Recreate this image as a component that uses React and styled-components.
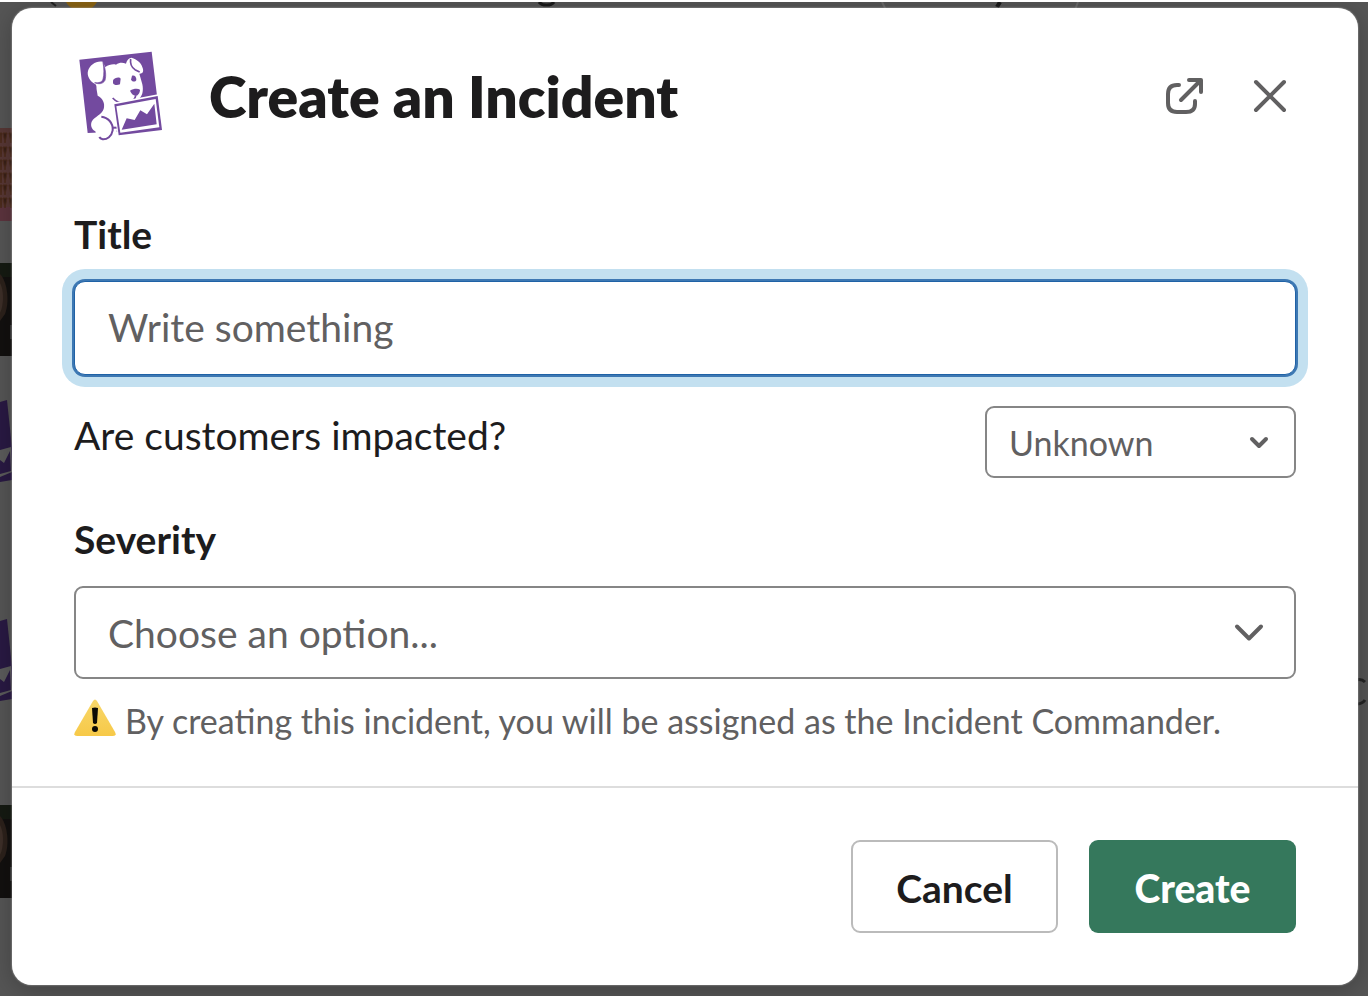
import React from "react";
import styled, { createGlobalStyle } from "styled-components";

const GlobalStyle = createGlobalStyle`
  *, *::before, *::after { box-sizing: border-box; }
  body {
    margin: 0;
    background: #555;
    color: #1d1c1d;
    font-family: Lato, "Liberation Sans", sans-serif;
  }
`;

const Page = styled.div`
  position: relative;
  min-height: 100vh;
  padding: 6px 10px 10px 12px;
  border-top: 2px solid #fff;
  overflow: hidden;
`;

const Backdrop = styled.div`
  position: absolute;
  inset: 0;
`;

const AvatarColumn = styled.div`
  display: flex;
  flex-direction: column;
  width: 24px;
  padding-top: 126px;
  svg { display: block; }
`;

const AvatarSlot = styled.div`
  margin-bottom: ${(p) => p.$gap}px;
`;

const TopPeek = styled.svg`
  position: absolute;
  top: 0;
  left: 0;
`;

const SidePeek = styled.svg`
  position: absolute;
  top: 674px;
  right: 0;
`;

const Modal = styled.form`
  position: relative;
  display: flex;
  flex-direction: column;
  background: #fff;
  border-radius: 20px;
  box-shadow: 0 0 2px #bbb, 0 4px 24px rgba(0, 0, 0, 0.25);
`;

const Header = styled.header`
  display: flex;
  align-items: center;
  height: 104px;
  margin: 36px 60px 0 62px;
`;

const Logo = styled.svg`
  width: 90px;
  height: 95px;
  margin: 0 0 2px 2px;
`;

const Heading = styled.h1`
  flex: 1;
  margin: 0 0 0 43px;
  font-size: 57px;
  line-height: 68px;
  font-weight: 800;
`;

const HeaderActions = styled.div`
  display: flex;
  gap: 30px;
`;

const IconButton = styled.button`
  display: flex;
  align-items: center;
  justify-content: center;
  width: 56px;
  height: 56px;
  padding: 0;
  border: 0;
  background: none;
  color: #616061;
  cursor: pointer;
`;

const Body = styled.div`
  display: flex;
  flex-direction: column;
  padding: 62px 62px 44px;
`;

const Field = styled.div`
  display: flex;
  flex-direction: column;
  gap: 23px;
`;

const Label = styled.label`
  font-size: 39px;
  line-height: 48px;
  font-weight: 700;
`;

const TextInput = styled.input`
  height: 94px;
  padding: 0 33px 2px;
  border: 1px solid #1f62a6;
  border-radius: 11px;
  outline: 0;
  box-shadow: 0 0 0 2px #3d78b3, 0 0 0 12px #c3e0f0;
  color: #1d1c1d;
  font: 400 39px/48px Lato, "Liberation Sans", sans-serif;
  &::placeholder { color: #616061; opacity: 1; }
`;

const InlineField = styled.div`
  display: flex;
  align-items: flex-start;
  justify-content: space-between;
  margin: 31px 0 37px;
`;

const InlineLabel = styled.label`
  font-size: 39px;
  line-height: 58px;
`;

const SelectWrap = styled.div`
  position: relative;
  width: ${(p) => (p.$compact ? "311px" : "100%")};
`;

const Select = styled.select`
  appearance: none;
  display: block;
  width: 100%;
  height: ${(p) => (p.$compact ? 72 : 93)}px;
  padding: ${(p) => (p.$compact ? "2px 22px 0" : "0 32px")};
  border: 2px solid #868686;
  border-radius: 9px;
  background: #fff;
  color: #616061;
  font: 400 ${(p) => (p.$compact ? 34 : 39)}px/48px Lato, "Liberation Sans", sans-serif;
`;

const Chevron = styled.svg`
  position: absolute;
  top: 0;
  right: ${(p) => p.$right}px;
  height: 100%;
  pointer-events: none;
`;

const Note = styled.p`
  display: flex;
  align-items: center;
  gap: 9px;
  margin: 20px 0 0;
  color: #616061;
  font-size: 34px;
  line-height: 43px;
  svg { margin-bottom: 5px; }
`;

const Footer = styled.footer`
  display: flex;
  justify-content: flex-end;
  gap: 31px;
  padding: 52px 62px;
  border-top: 2px solid #dddddd;
`;

const Button = styled.button`
  width: 207px;
  height: 93px;
  padding: 2px 0 0;
  border: ${(p) => (p.$primary ? "0" : "2px solid #bbbbbb")};
  border-radius: 9px;
  background: ${(p) => (p.$primary ? "#35785c" : "#fff")};
  color: ${(p) => (p.$primary ? "#fff" : "#1d1c1d")};
  font: ${(p) => (p.$primary ? 900 : 700)} 39px/48px Lato, "Liberation Sans", sans-serif;
  cursor: pointer;
`;

function DogLogo() {
  return (
    <Logo viewBox="50 25 270 285" aria-hidden="true">
      <path d="M60 60 277 36 293 168 307 270 85 280Z" fill="#734a9f" />
      {/* head, neck and chest */}
      <path
        d="M130 66C112 62 91 75 86 94C82 108 92 126 106 132C113 136 111 141 112 150L115 168C130 176 138 190 133 208C127 226 106 230 97 246C93 256 96 268 108 275L112 290L170 290L174 262 166 192C184 195 197 197 209 196C222 193 225 186 236 179C250 172 253 152 249 134L240 102C249 103 253 97 251 88C248 72 235 59 216 54C206 56 202 63 200 72C190 68 180 68 170 75C160 72 148 76 138 82Z"
        fill="#fff"
      />
      <path d="M131 68C139 88 141 108 137 122C131 134 116 134 106 129C118 130 129 128 131 118C135 104 134 86 131 68Z" fill="#734a9f" stroke="#734a9f" strokeWidth="2" />
      <path d="M214 58C212 71 218 84 227 90L241 97" fill="none" stroke="#734a9f" strokeWidth="5" />
      <path d="M161 122C166 113 181 111 184 117L182 134C174 138 163 137 161 130Z" fill="#734a9f" />
      <path d="M218 108C225 105 232 112 231 121C228 128 219 127 215 120Z" fill="#734a9f" />
      <path d="M212 153C222 147 235 146 242 150C242 160 235 168 229 169C221 167 215 161 212 153Z" fill="#734a9f" />
      <path d="M160 175C172 188 189 193 207 190C218 187 226 181 229 169" fill="none" stroke="#734a9f" strokeWidth="5" />
      {/* paw */}
      <path d="M126 231C146 233 162 250 160 272C157 290 143 300 130 299C126 298 122 296 120 292" fill="none" stroke="#734a9f" strokeWidth="6" />
      <path d="M160 264H174" stroke="#734a9f" strokeWidth="6" />
      {/* framed chart */}
      <path d="M161 189 296 164 300 190 312 276 176 294Z" fill="#fff" />
      <path d="M165 194 295 169 308 271 178 287Z" fill="#734a9f" />
      <path d="M171 200 289 178 300 263 183 279Z" fill="#fff" />
      <path d="M187 270 202 236 226 241 243 212 263 224 285 192 292 254Z" fill="#734a9f" />
    </Logo>
  );
}

function PatternAvatar() {
  return (
    <svg width="24" height="93" viewBox="0 0 24 93">
      <rect width="24" height="93" fill="#573735" />
      <rect y="79" width="24" height="14" fill="#5c343e" />
      {[5, 19, 32, 45, 57, 70].map((y) => (
        <path key={y} d={`M0 ${y}H2L1 ${y + 10}ZM3 ${y}H7L5 ${y + 10}ZM9 ${y}H13L11 ${y + 10}Z`} fill="#392017" stroke="#4d2c1d" />
      ))}
    </svg>
  );
}

function PortraitAvatar() {
  return (
    <svg width="24" height="93" viewBox="0 0 24 93">
      <rect width="24" height="93" fill="#12100f" />
      <path d="M0 0H24V14H0Z" fill="#151a12" />
      <path d="M0 11C7 18 10 38 5 51L0 58Z" fill="#2c211b" />
      <path d="M0 20C4 27 4 42 0 50Z" fill="#3d2f28" />
      <path d="M10 62H24V76H10Z" fill="#333" />
    </svg>
  );
}

function PurpleAvatar() {
  return (
    <svg width="24" height="82" viewBox="0 0 24 82">
      <path d="M0 2 7 0 12 48V80L0 82Z" fill="#291943" />
      <path d="M0 50 11 47 12 72 0 77Z" fill="#5b5b5b" />
      <path d="M0 60 4 63 10 51 11 71 0 74Z" fill="#291943" />
    </svg>
  );
}

export default function App() {
  return (
    <>
      <GlobalStyle />
      <Page>
        <Backdrop aria-hidden="true">
          <AvatarColumn>
            <AvatarSlot $gap={42}><PatternAvatar /></AvatarSlot>
            <AvatarSlot $gap={44}><PortraitAvatar /></AvatarSlot>
            <AvatarSlot $gap={137}><PurpleAvatar /></AvatarSlot>
            <AvatarSlot $gap={104}><PurpleAvatar /></AvatarSlot>
            <AvatarSlot $gap={0}><PortraitAvatar /></AvatarSlot>
          </AvatarColumn>
          <TopPeek width="1100" height="8" viewBox="0 0 1100 8">
            <path d="M66 0H97C95 4 91 7 87 8H76C71 6 68 4 66 0Z" fill="#8a6313" />
            <path d="M51 0 56 4" stroke="#222" strokeWidth="2" />
            <path d="M539 0C542 4 551 4 554 0" fill="none" stroke="#1a1a1a" strokeWidth="3" />
            <path d="M1000 0 997 5" stroke="#1a1a1a" strokeWidth="4" />
            <path d="M882 0 886 8M1078 0 1075 8" stroke="#6a6a6a" strokeWidth="2" />
          </TopPeek>
          <SidePeek width="12" height="34" viewBox="0 0 12 34">
            <path d="M0 4C4 3 7 4 9 6M0 28C4 28 7 27 9 24" fill="none" stroke="#242424" strokeWidth="3" />
          </SidePeek>
        </Backdrop>

        <Modal role="dialog" aria-labelledby="dialog-title" onSubmit={(e) => e.preventDefault()}>
          <Header>
            <DogLogo />
            <Heading id="dialog-title">Create an Incident</Heading>
            <HeaderActions>
              <IconButton type="button" aria-label="Open in new window">
                <svg width="40" height="40" viewBox="0 0 40 40" fill="none" stroke="currentColor" strokeWidth="4" strokeLinecap="round" strokeLinejoin="round">
                  <path d="M15 9H13Q4 9 4 18V27Q4 36 13 36H22Q31 36 31 28V25" />
                  <path d="M17 24 36 5M25 4H37V16" />
                  <path d="M31 4H37V10Z" fill="currentColor" strokeWidth="1" />
                </svg>
              </IconButton>
              <IconButton type="button" aria-label="Close">
                <svg width="40" height="40" viewBox="0 0 40 40" fill="none" stroke="currentColor" strokeWidth="4" strokeLinecap="round">
                  <path d="M6 6 34 34M34 6 6 34" />
                </svg>
              </IconButton>
            </HeaderActions>
          </Header>

          <Body>
            <Field>
              <Label htmlFor="title">Title</Label>
              <TextInput id="title" type="text" placeholder="Write something" />
            </Field>

            <InlineField>
              <InlineLabel htmlFor="impact">Are customers impacted?</InlineLabel>
              <SelectWrap $compact>
                <Select id="impact" $compact defaultValue="unknown">
                  <option value="unknown">Unknown</option>
                </Select>
                <Chevron $right={25} width="24" viewBox="0 0 24 24" fill="none" stroke="#616061" strokeWidth="4" strokeLinecap="round" strokeLinejoin="round">
                  <path d="M5 9 12 16 19 9" />
                </Chevron>
              </SelectWrap>
            </InlineField>

            <Field>
              <Label htmlFor="severity">Severity</Label>
              <SelectWrap>
                <Select id="severity" defaultValue="">
                  <option value="">Choose an option...</option>
                </Select>
                <Chevron $right={30} width="34" viewBox="0 0 34 34" fill="none" stroke="#616061" strokeWidth="4" strokeLinecap="round" strokeLinejoin="round">
                  <path d="M5 11 17 23 29 11" />
                </Chevron>
              </SelectWrap>
            </Field>

            <Note>
              <svg width="42" height="38" viewBox="0 0 42 38" role="img" aria-label="Warning">
                <defs>
                  <linearGradient id="amber" x2="0" y2="1">
                    <stop stopColor="#f8d76a" />
                    <stop offset="1" stopColor="#f7c948" />
                  </linearGradient>
                </defs>
                <path d="M19 2Q21-1 23 2L41 33Q43 37 39 37H3Q-1 37 1 33Z" fill="url(#amber)" />
                <path d="M18 9Q21 8 24 9L23 24Q21 26 19 24Z" fill="#0d0b05" />
                <circle cx="21" cy="30" r="3" fill="#0d0b05" />
              </svg>
              <span>By creating this incident, you will be assigned as the Incident Commander.</span>
            </Note>
          </Body>

          <Footer>
            <Button type="button">Cancel</Button>
            <Button type="submit" $primary>Create</Button>
          </Footer>
        </Modal>
      </Page>
    </>
  );
}
